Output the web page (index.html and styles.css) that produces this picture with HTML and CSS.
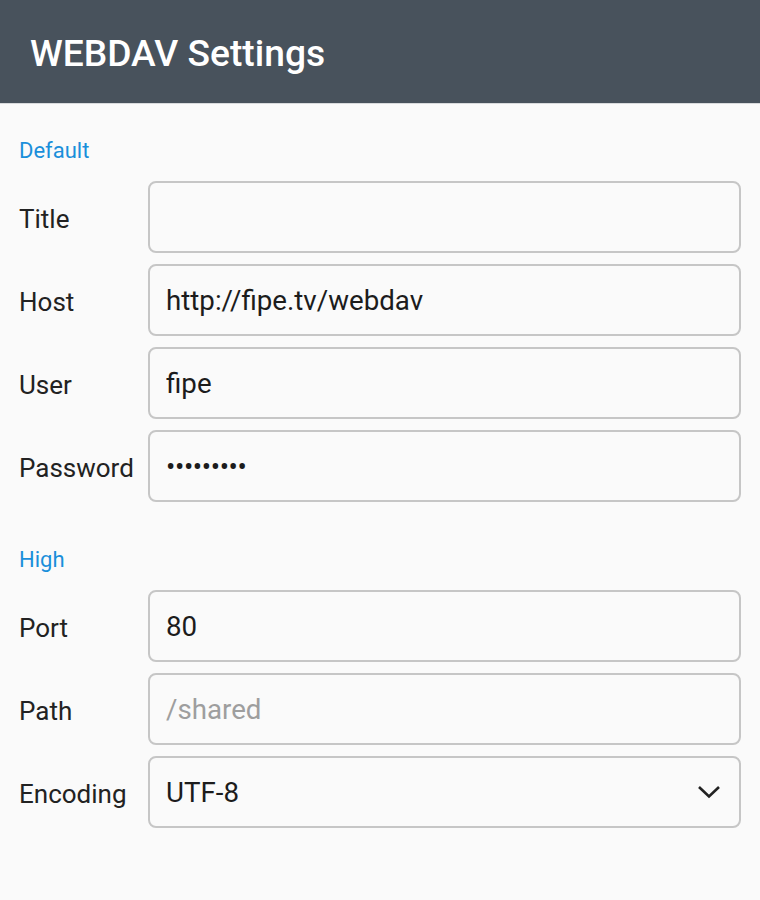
FILE: index.html
```html
<!DOCTYPE html>
<html>
<head>
<meta charset="utf-8">
<title>WEBDAV Settings</title>
<link rel="stylesheet" href="styles.css">
</head>
<body>
<header class="appbar"><h1 class="appbar-title">WEBDAV Settings</h1></header>
<main class="content">
  <section class="group group-first">
    <h2 class="group-title">Default</h2>
    <div class="rows">
      <label class="row"><span class="row-label">Title</span><input class="field" type="text" value=""></label>
      <label class="row"><span class="row-label">Host</span><input class="field" type="text" value="http://fipe.tv/webdav"></label>
      <label class="row"><span class="row-label">User</span><input class="field" type="text" value="fipe"></label>
      <label class="row"><span class="row-label">Password</span><input class="field field-pass" type="password" value="123456789"></label>
    </div>
  </section>
  <section class="group">
    <h2 class="group-title">High</h2>
    <div class="rows">
      <label class="row"><span class="row-label">Port</span><input class="field" type="text" value="80"></label>
      <label class="row"><span class="row-label">Path</span><input class="field" type="text" placeholder="/shared"></label>
      <div class="row"><span class="row-label">Encoding</span>
        <div class="field select"><span class="select-value">UTF-8</span>
          <svg class="chevron" width="24" height="14" viewBox="0 0 24 14"><path d="M2 2 L12 11.5 L22 2" fill="none" stroke="#222" stroke-width="2.6" stroke-linecap="butt" stroke-linejoin="miter"/></svg>
        </div>
      </div>
    </div>
  </section>
</main>
</body>
</html>
```
FILE: styles.css
```css
* { box-sizing: border-box; }
html, body { margin: 0; padding: 0; }
body {
  background: #fafafa;
  font-family: Roboto, "Noto Sans", sans-serif;
  color: #212121;
  width: 760px;
  height: 900px;
}
.appbar {
  height: 104px;
  background: #48525c;
  display: flex;
  align-items: center;
  padding: 0 30px;
  border-bottom: 1px solid #d8dadc;
}
.appbar-title {
  margin: 0;
  color: #ffffff;
  font-size: 37.2px;
  font-weight: 500;
  letter-spacing: 0;
  padding-top: 2px;
}
.content { padding: 0 19px; }
.group { margin-top: 43px; }
.group-first { margin-top: 32px; }
.group-title {
  margin: 0 0 15px 0;
  height: 30px;
  line-height: 30px;
  font-size: 22px;
  font-weight: 400;
  color: #1a8fda;
}
.rows { display: flex; flex-direction: column; gap: 11px; }
.row {
  display: flex;
  align-items: center;
  height: 72px;
}
.row-label {
  width: 129px;
  flex: none;
  font-size: 26px;
  color: #222;
  padding-top: 4px;
}
.field {
  flex: 1;
  height: 72px;
  border: 2px solid #c6c6c6;
  border-radius: 8px;
  background: #fafafa;
  padding: 0 16px;
  font-family: Roboto, "Noto Sans", sans-serif;
  font-size: 27.7px;
  color: #1c1c1c;
  outline: none;
}
.field::placeholder { color: #9e9e9e; }
.field-pass { letter-spacing: -0.4px; font-size: 27.7px; }
.select {
  display: flex;
  align-items: center;
  justify-content: space-between;
  padding-right: 18px;
}
.chevron { display: block; }
```
